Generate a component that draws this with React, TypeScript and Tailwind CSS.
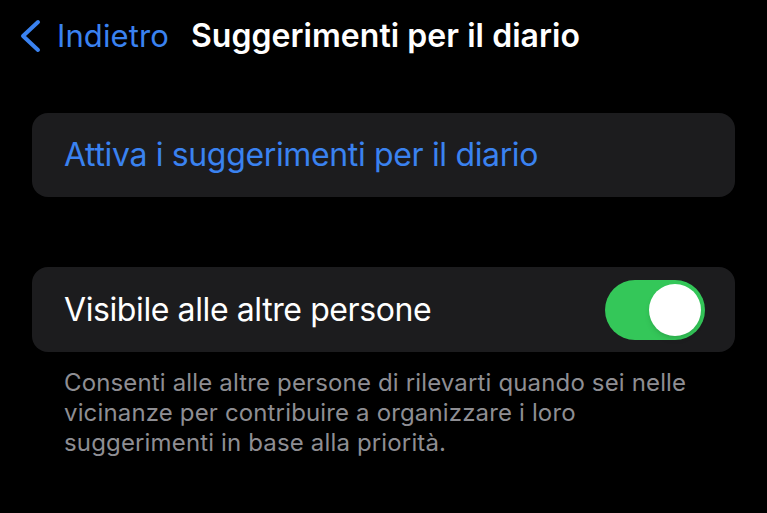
function Toggle({ on }: { on: boolean }) {
  return (
    <div
      className={`flex h-[60px] w-[100px] items-center rounded-full p-[4px] ${
        on ? 'justify-end bg-[#34c759]' : 'justify-start bg-[#39393d]'
      }`}
    >
      <div className="h-[52px] w-[52px] rounded-full bg-white shadow-md" />
    </div>
  );
}

export default function App() {
  return (
    <div className="h-[513px] w-[767px] overflow-hidden bg-black font-['Inter',sans-serif] text-white">
      {/* Nav bar */}
      <div className="flex h-[72px] items-center pl-[18px]">
        <div className="flex items-center text-[#3a82f0]">
          <svg width="24" height="34" viewBox="0 0 24 34" fill="none">
            <path d="M20 3 L5 17 L20 31" stroke="currentColor" strokeWidth="4" strokeLinecap="round" strokeLinejoin="round" />
          </svg>
          <span className="ml-[15px] text-[31px] tracking-[0.1px]">Indietro</span>
        </div>
        <h1 className="ml-[22px] text-[32px] font-semibold tracking-[0.05px]">Suggerimenti per il diario</h1>
      </div>

      <div className="px-[32px]">
        {/* Action row */}
        <div className="mt-[41px] flex h-[84px] items-center rounded-[16px] bg-[#1c1c1e] px-[32px]">
          <span className="text-[32px] tracking-[-0.35px] text-[#3a82f0]">Attiva i suggerimenti per il diario</span>
        </div>

        {/* Visibility row */}
        <div className="mt-[70px] flex h-[85px] items-center justify-between rounded-[16px] bg-[#1c1c1e] pl-[32px] pr-[30px]">
          <span className="text-[32px] tracking-[-0.4px]">Visibile alle altre persone</span>
          <Toggle on />
        </div>

        <p className="mt-[16px] w-[690px] px-[32px] text-[24px] leading-[30px] tracking-[0.15px] text-[#8e8e93]">
          Consenti alle altre persone di rilevarti quando sei nelle vicinanze per contribuire a organizzare i loro
          suggerimenti in base alla priorità.
        </p>
      </div>
    </div>
  );
}
